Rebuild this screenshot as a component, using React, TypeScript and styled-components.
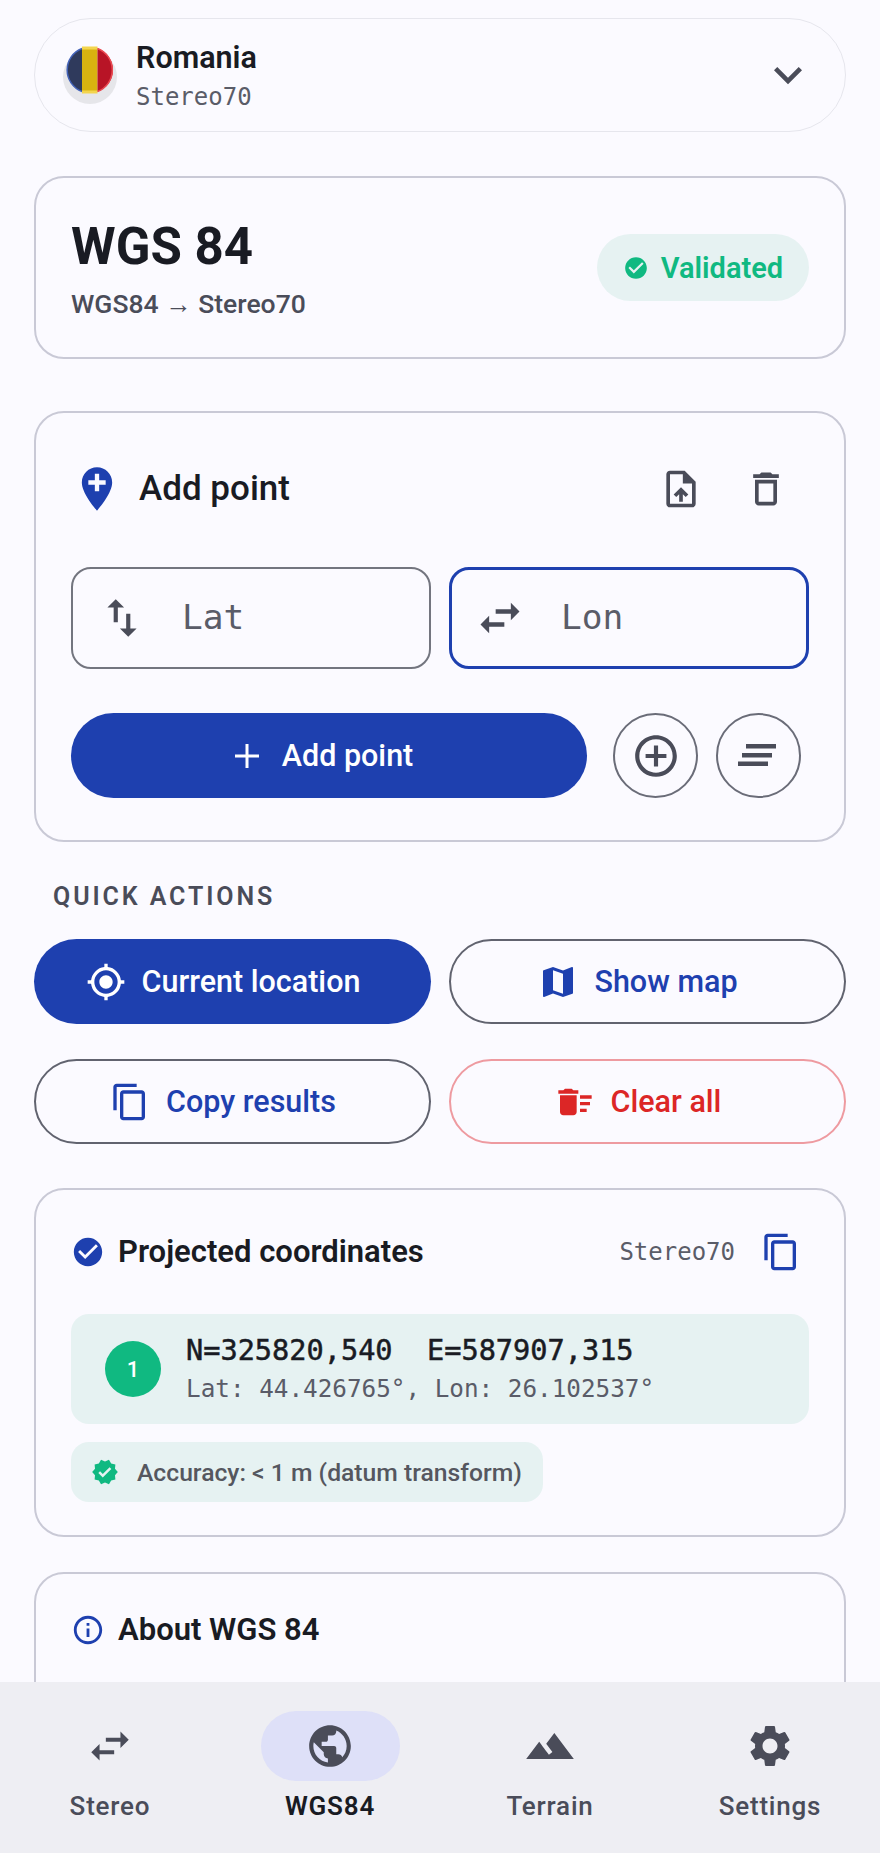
import React from "react";
import styled, { createGlobalStyle } from "styled-components";
import {
  MdAddCircleOutline, MdAddLocation, MdCheckCircle, MdContentCopy, MdDeleteSweep,
  MdExpandMore, MdInfoOutline, MdMap, MdMyLocation, MdOutlineDelete, MdOutlineUploadFile,
  MdPublic, MdSettings, MdSwapHoriz, MdSwapVert, MdTerrain, MdVerified,
} from "react-icons/md";

const BLUE = "#1e40af";
const GREEN = "#10b981";
const INK = "#191b23";
const MUTED = "#4a4c59";
const MONO = `"DejaVu Sans Mono", "Liberation Mono", monospace`;

const Global = createGlobalStyle`
  html, body { margin: 0; padding: 0; height: 1853px; overflow: hidden; background: #fbfaff; }
  body { font-family: Roboto, "Noto Sans", sans-serif; color: ${INK}; }
  * { box-sizing: border-box; }
`;

const Screen = styled.div`
  width: 880px; height: 1853px; display: flex; flex-direction: column; overflow: hidden;
`;
const Main = styled.main`
  flex: 1; min-height: 0; overflow: hidden; padding: 18px 34px 0;
  display: flex; flex-direction: column;
`;
const Selector = styled.div`
  flex: none; height: 114px; border: 1px solid #e6e6ed; border-radius: 57px;
  display: flex; align-items: center; padding: 0 29px 0 28px;
`;
const FlagWrap = styled.div`
  width: 54px; height: 58px; margin-right: 19px; flex: none;
`;
const SelectorText = styled.div`
  flex: 1; display: flex; flex-direction: column; gap: 7px; margin-top: 3px;
`;
const CountryName = styled.div`
  font-size: 30.5px; font-weight: 600; line-height: 34px;
`;
const Mono = styled.div`
  font-family: ${MONO}; font-size: 24px; line-height: 30px; color: #5a5c68;
`;
const Card = styled.section<{ $top: number; $height: number }>`
  flex: none; margin-top: ${(p) => p.$top}px; height: ${(p) => p.$height}px;
  border: 2px solid #c9c9d6; border-radius: 30px; padding: 0 35px;
`;
const HeroCard = styled(Card)`
  display: flex; align-items: center; justify-content: space-between;
`;
const HeroTitle = styled.h1`
  margin: 0; font-size: 51px; line-height: 60px; font-weight: 700;
`;
const HeroSub = styled.div`
  margin-top: 12px; font-size: 26.5px; line-height: 30px; font-weight: 500; color: ${MUTED};
`;
const Badge = styled.div`
  width: 212px; height: 67px; border-radius: 34px; background: #e6f2f2; color: ${GREEN};
  display: flex; align-items: center; justify-content: center; gap: 12px;
  font-size: 29px; font-weight: 600;
`;
const AddHeader = styled.div`
  display: flex; align-items: center; height: 52px; margin-top: 50px;
`;
const AddTitle = styled.h2`
  margin: 0 0 0 16px; flex: 1; font-size: 35px; font-weight: 500; line-height: 40px;
`;
const IconButton = styled.div<{ $right: number }>`
  width: 44px; height: 44px; display: flex; color: ${MUTED}; margin-right: ${(p) => p.$right}px;
`;
const Fields = styled.div`
  display: flex; gap: 18px; margin-top: 52px;
`;
const Field = styled.div<{ $focus?: boolean }>`
  flex: 1; height: 102px; border-radius: 20px; display: flex; align-items: center; gap: 35px;
  padding-left: ${(p) => (p.$focus ? 22 : 24)}px;
  border: ${(p) => (p.$focus ? `3px solid ${BLUE}` : "2px solid #73757f")};
  color: ${MUTED};
`;
const Placeholder = styled.span`
  font-family: ${MONO}; font-size: 34.5px; color: #5a5c68; margin-top: -2px;
`;
const ActionRow = styled.div`
  display: flex; align-items: center; margin-top: 44px;
`;
const PrimaryButton = styled.div`
  width: 516px; height: 85px; border-radius: 43px; background: ${BLUE}; color: #fff;
  display: flex; align-items: center; justify-content: center; gap: 15px;
  font-size: 30.5px; font-weight: 500; padding-right: 18px;
`;
const RoundButton = styled.div<{ $left: number }>`
  width: 85px; height: 85px; border-radius: 50%; border: 2px solid #6a6c78; color: ${MUTED};
  margin-left: ${(p) => p.$left}px; display: flex; align-items: center; justify-content: center;
`;
const SectionLabel = styled.div`
  margin: 43px 0 0 19px; height: 24px; line-height: 24px; font-size: 25px; font-weight: 600;
  letter-spacing: 2.9px; color: ${MUTED};
`;
const QuickGrid = styled.div`
  display: grid; grid-template-columns: 397px 397px; column-gap: 18px; row-gap: 35px; margin-top: 30px;
`;
const QuickButton = styled.div<{ $kind: "solid" | "outline" | "danger" }>`
  height: 85px; border-radius: 43px; display: flex; align-items: center; justify-content: center;
  gap: 16px; padding-right: 19px; font-size: 30.5px; font-weight: 500;
  background: ${(p) => (p.$kind === "solid" ? BLUE : "transparent")};
  color: ${(p) => (p.$kind === "solid" ? "#fff" : p.$kind === "danger" ? "#dc2626" : BLUE)};
  border: ${(p) =>
    p.$kind === "solid" ? "none" : p.$kind === "danger" ? "2px solid #ee9aa0" : "2px solid #61636f"};
`;
const CardHeader = styled.div<{ $top: number }>`
  display: flex; align-items: center; gap: 13px; margin-top: ${(p) => p.$top}px; height: 42px;
`;
const CardTitle = styled.h3`
  margin: 0; font-size: 31px; font-weight: 600; line-height: 36px;
`;
const HeaderSpacer = styled.div`
  flex: 1;
`;
const CopyButton = styled.div`
  width: 40px; height: 40px; color: ${BLUE}; display: flex; margin: 0 8px 0 13px;
`;
const ResultRow = styled.div`
  margin-top: 41px; height: 110px; background: #e6f2f2; border-radius: 18px;
  display: flex; align-items: center; padding-left: 34px; gap: 25px;
`;
const Index = styled.div`
  width: 56px; height: 56px; border-radius: 50%; background: ${GREEN}; color: #fff;
  display: flex; align-items: center; justify-content: center; font-size: 22px; font-weight: 500;
`;
const ResultText = styled.div`
  display: flex; flex-direction: column; gap: 7px; margin-top: -1px;
`;
const Coords = styled.div`
  font-family: ${MONO}; font-size: 28.6px; line-height: 34px; font-weight: 400; white-space: pre;
  color: ${INK}; -webkit-text-stroke: 0.5px ${INK};
`;
const Source = styled.div`
  font-family: ${MONO}; font-size: 24.3px; line-height: 30px; color: #5a5c68; white-space: pre;
`;
const AccuracyChip = styled.div`
  margin-top: 18px; width: 472px; height: 60px; border-radius: 18px; background: #e6f2f2;
  display: flex; align-items: center; gap: 18px; padding-left: 20px;
  font-size: 24.7px; font-weight: 500; color: #55575f;
`;
const ChipIcon = styled.span`
  display: flex; color: ${GREEN};
`;
const BottomNav = styled.nav`
  flex: none; height: 171px; background: #eeeef3; display: grid; grid-template-columns: repeat(4, 220px);
`;
const NavItem = styled.div`
  display: flex; flex-direction: column; align-items: center; padding-top: 29px;
`;
const NavIcon = styled.div<{ $active?: boolean }>`
  width: 139px; height: 70px; border-radius: 35px; display: flex; align-items: center; justify-content: center;
  color: ${MUTED}; background: ${(p) => (p.$active ? "#dee0f8" : "transparent")};
`;
const NavLabel = styled.div<{ $active?: boolean }>`
  margin-top: 10px; font-size: 26px; line-height: 30px; letter-spacing: 0.8px;
  font-weight: ${(p) => (p.$active ? 600 : 500)};
  color: ${(p) => (p.$active ? INK : MUTED)};
`;

const Flag = () => (
  <svg width="54" height="58" viewBox="0 0 54 58" aria-hidden="true">
    <circle cx="27" cy="31" r="27" fill="#e6e6ea" />
    <defs>
      <clipPath id="flag"><circle cx="27" cy="24" r="23" /></clipPath>
    </defs>
    <g clipPath="url(#flag)">
      <rect x="0" y="0" width="19" height="58" fill="#2f3a5c" />
      <rect x="19" y="0" width="15.5" height="58" fill="#d9b310" />
      <rect x="34.5" y="0" width="19.5" height="58" fill="#b81426" />
    </g>
    <path d="M19 2.5A23 23 0 0 0 19 45.5" fill="none" stroke="#4463b8" strokeWidth="1.5" />
    <path d="M19 2h15.5M19 46h15.5" stroke="#f3d54e" strokeWidth="3" />
    <path d="M34.5 2.5A23 23 0 0 1 34.5 45.5" fill="none" stroke="#ea4a52" strokeWidth="1.5" />
  </svg>
);

const SortLines = () => (
  <svg width="44" height="30" viewBox="0 0 44 30" aria-hidden="true" fill="currentColor">
    <rect x="9" y="3" width="30" height="4.5" />
    <rect x="5" y="12" width="30" height="4.5" />
    <rect x="1" y="20.5" width="30" height="4.5" />
  </svg>
);

const ThinPlus = () => (
  <svg width="40" height="40" viewBox="0 0 40 40" aria-hidden="true" stroke="currentColor" strokeWidth="3" fill="none">
    <path d="M20 8v24M8 20h24" />
  </svg>
);

const navItems = [
  { label: "Stereo", icon: <MdSwapHoriz size={50} /> },
  { label: "WGS84", icon: <MdPublic size={50} />, active: true },
  { label: "Terrain", icon: <MdTerrain size={52} /> },
  { label: "Settings", icon: <MdSettings size={50} /> },
];

export default function App() {
  return (
    <Screen>
      <Global />
      <Main>
        <Selector>
          <FlagWrap><Flag /></FlagWrap>
          <SelectorText>
            <CountryName>Romania</CountryName>
            <Mono>Stereo70</Mono>
          </SelectorText>
          <MdExpandMore size={56} color={MUTED} />
        </Selector>

        <HeroCard $top={44} $height={183}>
          <div>
            <HeroTitle>WGS 84</HeroTitle>
            <HeroSub>WGS84 → Stereo70</HeroSub>
          </div>
          <Badge><MdCheckCircle size={26} />Validated</Badge>
        </HeroCard>

        <Card $top={52} $height={431}>
          <AddHeader>
            <MdAddLocation size={52} color={BLUE} />
            <AddTitle>Add point</AddTitle>
            <IconButton $right={41}><MdOutlineUploadFile size={44} /></IconButton>
            <IconButton $right={21}><MdOutlineDelete size={44} /></IconButton>
          </AddHeader>
          <Fields>
            <Field><MdSwapVert size={50} /><Placeholder>Lat</Placeholder></Field>
            <Field $focus><MdSwapHoriz size={52} /><Placeholder>Lon</Placeholder></Field>
          </Fields>
          <ActionRow>
            <PrimaryButton><ThinPlus />Add point</PrimaryButton>
            <RoundButton $left={26}><MdAddCircleOutline size={50} /></RoundButton>
            <RoundButton $left={18}><SortLines /></RoundButton>
          </ActionRow>
        </Card>

        <SectionLabel>QUICK ACTIONS</SectionLabel>
        <QuickGrid>
          <QuickButton $kind="solid"><MdMyLocation size={40} />Current location</QuickButton>
          <QuickButton $kind="outline"><MdMap size={40} />Show map</QuickButton>
          <QuickButton $kind="outline"><MdContentCopy size={40} />Copy results</QuickButton>
          <QuickButton $kind="danger"><MdDeleteSweep size={40} />Clear all</QuickButton>
        </QuickGrid>

        <Card $top={44} $height={349}>
          <CardHeader $top={41}>
            <MdCheckCircle size={34} color={BLUE} />
            <CardTitle>Projected coordinates</CardTitle>
            <HeaderSpacer />
            <Mono>Stereo70</Mono>
            <CopyButton><MdContentCopy size={40} /></CopyButton>
          </CardHeader>
          <ResultRow>
            <Index>1</Index>
            <ResultText>
              <Coords>{"N=325820,540  E=587907,315"}</Coords>
              <Source>{"Lat: 44.426765°, Lon: 26.102537°"}</Source>
            </ResultText>
          </ResultRow>
          <AccuracyChip>
            <ChipIcon><MdVerified size={28} /></ChipIcon>
            Accuracy: &lt; 1 m (datum transform)
          </AccuracyChip>
        </Card>

        <Card $top={35} $height={200}>
          <CardHeader $top={35}>
            <MdInfoOutline size={34} color={BLUE} />
            <CardTitle>About WGS 84</CardTitle>
          </CardHeader>
        </Card>
      </Main>
      <BottomNav>
        {navItems.map((item) => (
          <NavItem key={item.label}>
            <NavIcon $active={item.active}>{item.icon}</NavIcon>
            <NavLabel $active={item.active}>{item.label}</NavLabel>
          </NavItem>
        ))}
      </BottomNav>
    </Screen>
  );
}
